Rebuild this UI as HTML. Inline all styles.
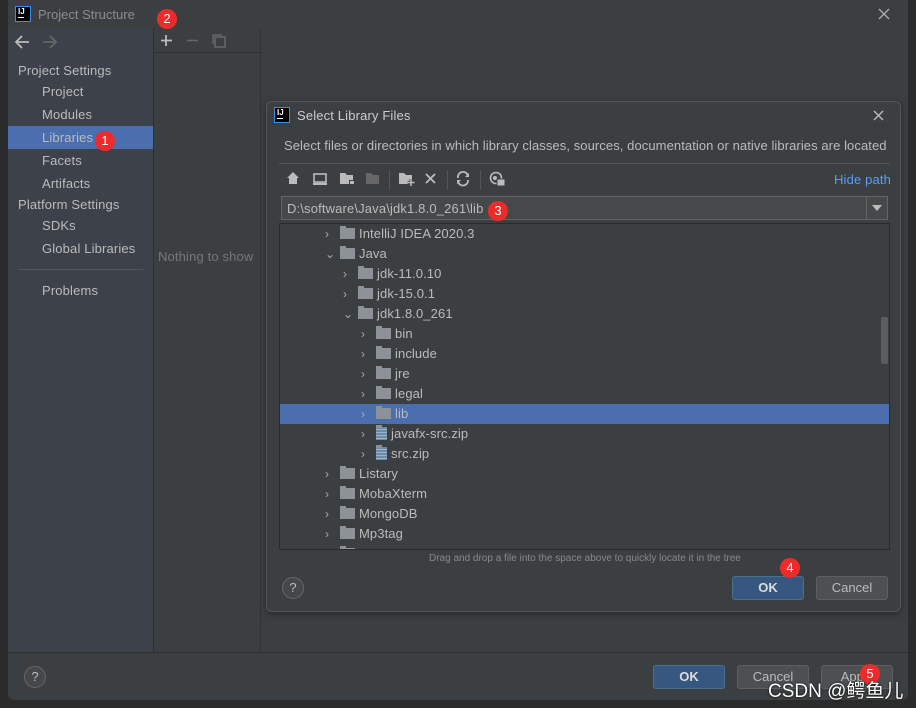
<!DOCTYPE html><html><head><style>
*{margin:0;padding:0;box-sizing:border-box}
body{width:916px;height:708px;background:#2b2b2b;font-family:"Liberation Sans","Noto Sans CJK SC",sans-serif;font-size:13px;color:#bbbbbb;position:relative;overflow:hidden}
.a{position:absolute}
.ij{position:absolute;width:16px;height:16px;background:#000;border:1px solid #3d8ee8;color:#fff;font-size:8px;font-weight:bold;line-height:9px;padding-left:2px}
.ij:after{content:"";position:absolute;left:2px;bottom:3px;width:6px;height:1px;background:#fff}
.badge{position:absolute;width:20px;height:20px;border-radius:50%;background:#ee2b2b;color:#fff;font-size:13px;text-align:center;line-height:20px}
.row{position:absolute;left:0;height:20px;width:610px;line-height:20px;color:#bbbbbb;letter-spacing:.1px}
.fold{display:inline-block;width:15px;height:11px;background:#8c9297;vertical-align:-1px;margin-right:4px;position:relative}
.fold:before{content:"";position:absolute;left:0;top:-2px;width:6px;height:3px;background:#8c9297}
.chev{display:inline-block;width:18px;color:#aaa;font-size:12px;padding-left:3px}
.btn{position:absolute;height:24px;border-radius:3px;text-align:center;line-height:22px;font-size:13px}
.t{letter-spacing:.15px}
</style></head><body>
<div class="a" style="left:8px;top:0;width:900px;height:700px;background:#3c3f41;border-radius:0 0 6px 6px"></div>
<div class="ij" style="left:15px;top:6px">IJ</div>
<div class="a" style="left:38px;top:7px;color:#8c8c8c">Project Structure</div>
<svg class="a" style="left:878px;top:8px" width="12" height="12"><path d="M1 1L11 11M11 1L1 11" stroke="#aaa" stroke-width="1.4"/></svg>
<div class="badge" style="left:157px;top:9px">2</div>
<div class="a" style="left:8px;top:28px;width:145px;height:624px;background:#3d4149"></div>
<div class="a" style="left:153px;top:28px;width:1px;height:624px;background:#2d2f31"></div>
<div class="a" style="left:260px;top:28px;width:1px;height:624px;background:#333"></div>
<div class="a" style="left:154px;top:52px;width:106px;height:1px;background:#2d2f31"></div>
<svg class="a" style="left:15px;top:35px" width="60" height="14"><path d="M1 7H14M7 1L1 7L7 13" stroke="#bbb" stroke-width="1.8" fill="none"/><path d="M28 7H41M35 1L41 7L35 13" stroke="#666" stroke-width="1.8" fill="none"/></svg>
<svg class="a" style="left:160px;top:34px" width="70" height="14"><path d="M6 1V12M1 6.5H12" stroke="#bbb" stroke-width="1.8"/><path d="M27 6.5H38" stroke="#666" stroke-width="1.6"/><rect x="55" y="3" width="10" height="10" fill="none" stroke="#666" stroke-width="1.6"/><path d="M53 10V1H62" stroke="#666" stroke-width="1.4" fill="none"/></svg>
<div class="a t" style="left:18px;top:63px">Project Settings</div>
<div class="a t" style="left:42px;top:84px">Project</div>
<div class="a t" style="left:42px;top:107px">Modules</div>
<div class="a" style="left:8px;top:126px;width:145px;height:23px;background:#4b6eaf"></div>
<div class="a t" style="left:42px;top:130px">Libraries</div>
<div class="badge" style="left:95px;top:131px">1</div>
<div class="a t" style="left:42px;top:153px">Facets</div>
<div class="a t" style="left:42px;top:176px">Artifacts</div>
<div class="a t" style="left:18px;top:197px">Platform Settings</div>
<div class="a t" style="left:42px;top:218px">SDKs</div>
<div class="a t" style="left:42px;top:241px">Global Libraries</div>
<div class="a" style="left:18px;top:269px;width:125px;height:1px;background:#555"></div>
<div class="a t" style="left:42px;top:283px">Problems</div>
<div class="a t" style="left:158px;top:249px;color:#777">Nothing to show</div>
<div class="a" style="left:8px;top:652px;width:900px;height:1px;background:#2d2f31"></div>
<div class="a" style="left:24px;top:666px;width:22px;height:22px;border-radius:50%;border:1px solid #666;background:#45484a;text-align:center;line-height:20px;font-size:13px">?</div>
<div class="btn" style="left:653px;top:665px;width:72px;background:#365880;border:1px solid #4c708c;font-weight:bold;color:#ddd">OK</div>
<div class="btn" style="left:737px;top:665px;width:72px;background:#4c5052;border:1px solid #5e6060">Cancel</div>
<div class="btn" style="left:821px;top:665px;width:72px;background:#4c5052;border:1px solid #5e6060">Apply</div>
<div class="badge" style="left:860px;top:664px">5</div>
<div class="a" style="left:768px;top:676px;color:#fff;font-size:19px;text-shadow:0 0 2px #000">CSDN @鳄鱼儿</div>

<div class="a" style="left:266px;top:101px;width:635px;height:511px;background:#3c3f41;border:1px solid #555;border-radius:6px;box-shadow:0 2px 8px rgba(0,0,0,.4)"></div>
<div class="ij" style="left:274px;top:107px">IJ</div>
<div class="a t" style="left:297px;top:108px;color:#ccc">Select Library Files</div>
<svg class="a" style="left:873px;top:110px" width="11" height="11"><path d="M1 1L10 10M10 1L1 10" stroke="#bbb" stroke-width="1.4"/></svg>
<div class="a" style="left:284px;top:138px;letter-spacing:.08px;white-space:nowrap">Select files or directories in which library classes, sources, documentation or native libraries are located</div>
<div class="a" style="left:279px;top:163px;width:611px;height:1px;background:#555"></div>
<svg class="a" style="left:286px;top:171px" width="225" height="18">
<path d="M1 7L7 1L13 7H11V13H3V7Z" fill="#bbb"/>
<rect x="28" y="3" width="12" height="8" fill="none" stroke="#bbb" stroke-width="1.6"/><rect x="27" y="12" width="14" height="2" fill="#bbb"/>
<path d="M54 2H59L61 4H67V13H54Z" fill="#bbb"/><rect x="63" y="9" width="5" height="5" fill="#3c3f41"/><rect x="64" y="10" width="4" height="3" fill="#bbb"/>
<path d="M80 2H85L87 4H93V13H80Z" fill="#666"/>
<path d="M113 2H118L120 4H126V13H113Z" fill="#bbb"/><path d="M125 8V15M121.5 11.5H128.5" stroke="#3c3f41" stroke-width="3"/><path d="M125 8V15M121.5 11.5H128.5" stroke="#bbb" stroke-width="1.5"/>
<path d="M140 3L149 12M149 3L140 12" stroke="#bbb" stroke-width="1.8"/>
<path d="M182 5A5 5 0 0 0 172 7M172 10A5 5 0 0 0 182 9" stroke="#bbb" stroke-width="1.8" fill="none"/><path d="M183 2V6H179Z M171 13V9H175Z" fill="#bbb"/>
<circle cx="210" cy="7" r="5.5" fill="none" stroke="#bbb" stroke-width="1.6"/><circle cx="209" cy="7" r="2" fill="#bbb"/><rect x="211" y="8" width="8" height="7" fill="#bbb" stroke="#3c3f41"/>
</svg>
<div class="a" style="left:389px;top:170px;width:1px;height:20px;background:#555"></div>
<div class="a" style="left:447px;top:170px;width:1px;height:20px;background:#555"></div>
<div class="a" style="left:480px;top:170px;width:1px;height:20px;background:#555"></div>
<div class="a t" style="left:834px;top:172px;color:#589df6">Hide path</div>
<div class="a" style="left:281px;top:196px;width:607px;height:24px;background:#45494a;border:1px solid #646464"></div>
<div class="a" style="left:866px;top:197px;width:1px;height:22px;background:#646464"></div>
<svg class="a" style="left:872px;top:205px" width="10" height="6"><path d="M0 0H10L5 6Z" fill="#bbb"/></svg>
<div class="a t" style="left:287px;top:201px">D:\software\Java\jdk1.8.0_261\lib</div>
<div class="badge" style="left:488px;top:201px">3</div>
<div class="a" style="left:279px;top:223px;width:611px;height:327px;background:#3c3f41;border:1px solid #2b2b2b;overflow:hidden">
<div class="row" style="top:0;padding-left:42px"><span class="chev">›</span><span class="fold"></span>IntelliJ IDEA 2020.3</div>
<div class="row" style="top:20px;padding-left:42px"><span class="chev">⌄</span><span class="fold"></span>Java</div>
<div class="row" style="top:40px;padding-left:60px"><span class="chev">›</span><span class="fold"></span>jdk-11.0.10</div>
<div class="row" style="top:60px;padding-left:60px"><span class="chev">›</span><span class="fold"></span>jdk-15.0.1</div>
<div class="row" style="top:80px;padding-left:60px"><span class="chev">⌄</span><span class="fold"></span>jdk1.8.0_261</div>
<div class="row" style="top:100px;padding-left:78px"><span class="chev">›</span><span class="fold"></span>bin</div>
<div class="row" style="top:120px;padding-left:78px"><span class="chev">›</span><span class="fold"></span>include</div>
<div class="row" style="top:140px;padding-left:78px"><span class="chev">›</span><span class="fold"></span>jre</div>
<div class="row" style="top:160px;padding-left:78px"><span class="chev">›</span><span class="fold"></span>legal</div>
<div class="row" style="top:180px;padding-left:78px;background:#4b6eaf"><span class="chev">›</span><span class="fold"></span>lib</div>
<div class="row" style="top:200px;padding-left:78px"><span class="chev">›</span><span class="fold" style="width:11px;height:13px;vertical-align:-2px;background:repeating-linear-gradient(#6d8aa8 0 2px,#9fb4c8 2px 3px)"></span>javafx-src.zip</div>
<div class="row" style="top:220px;padding-left:78px"><span class="chev">›</span><span class="fold" style="width:11px;height:13px;vertical-align:-2px;background:repeating-linear-gradient(#6d8aa8 0 2px,#9fb4c8 2px 3px)"></span>src.zip</div>
<div class="row" style="top:240px;padding-left:42px"><span class="chev">›</span><span class="fold"></span>Listary</div>
<div class="row" style="top:260px;padding-left:42px"><span class="chev">›</span><span class="fold"></span>MobaXterm</div>
<div class="row" style="top:280px;padding-left:42px"><span class="chev">›</span><span class="fold"></span>MongoDB</div>
<div class="row" style="top:300px;padding-left:42px"><span class="chev">›</span><span class="fold"></span>Mp3tag</div>
<div class="row" style="top:320px;padding-left:42px"><span class="chev">›</span><span class="fold"></span>MySQL</div>
<div class="a" style="left:601px;top:93px;width:7px;height:47px;background:#5a5d5f;border-radius:2px"></div>
</div>
<div class="a" style="left:429px;top:553px;font-size:10px;color:#888">Drag and drop a file into the space above to quickly locate it in the tree</div>
<div class="a" style="left:282px;top:577px;width:22px;height:22px;border-radius:50%;border:1px solid #666;background:#45484a;text-align:center;line-height:20px">?</div>
<div class="btn" style="left:732px;top:576px;width:72px;background:#365880;border:1px solid #4c708c;font-weight:bold;color:#ddd">OK</div>
<div class="badge" style="left:780px;top:558px">4</div>
<div class="btn" style="left:816px;top:576px;width:72px;background:#4c5052;border:1px solid #5e6060">Cancel</div>
</body></html>
